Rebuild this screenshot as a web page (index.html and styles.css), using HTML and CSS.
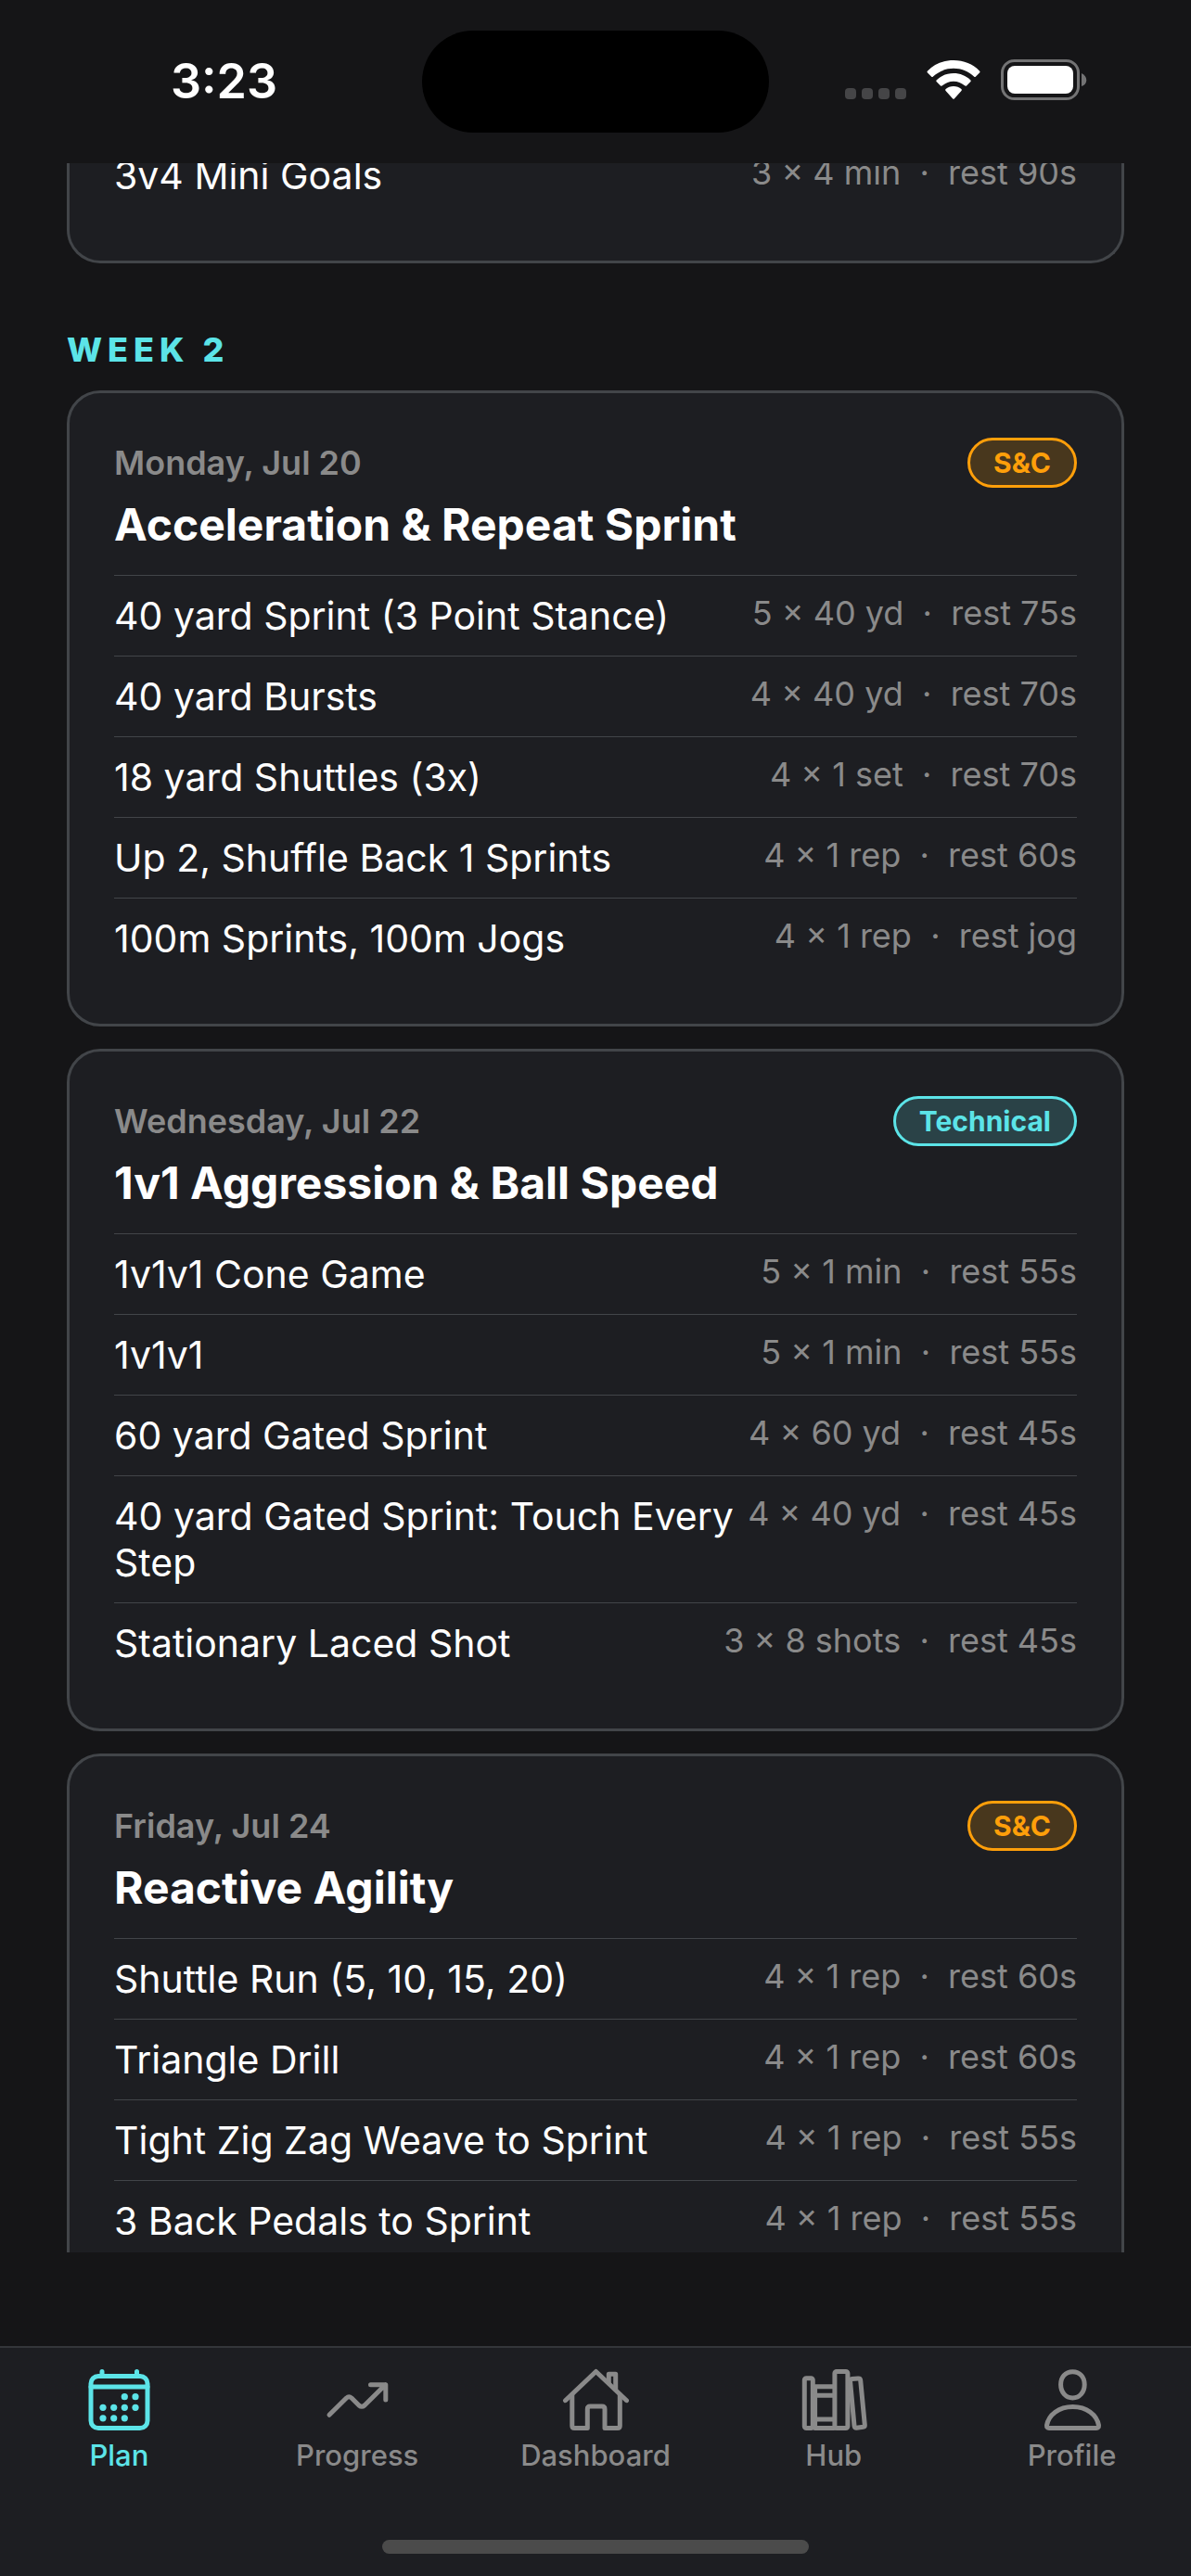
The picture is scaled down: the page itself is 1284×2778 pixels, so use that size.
FILE: index.html
```html
<!DOCTYPE html>
<html lang="en">
<head>
    <meta charset="UTF-8">
    <meta name="viewport" content="width=device-width, initial-scale=1.0">
    <title>Training Plan</title>
    <link rel="stylesheet" href="styles.css">
</head>

<body>

    <header class="status-bar">
        <div class="status-time">3:23</div>
        <div class="island"></div>
        <div class="status-icons">
            <svg width="66" height="44" viewBox="0 0 66 44" fill="#454547">
                <rect x="0" y="31" width="12" height="12" rx="4"/>
                <rect x="18" y="31" width="12" height="12" rx="4"/>
                <rect x="36" y="31" width="12" height="12" rx="4"/>
                <rect x="54" y="31" width="12" height="12" rx="4"/>
            </svg>
            <svg width="58" height="44" viewBox="0 0 58 44" fill="#fff">
                <path d="M29 1C18 1 8 5 1 12.500Q0 13.500 1 14.500L5 18.500Q6 19.500 7 18.500C13 13 20.500 9.800 29 9.800S45 13 51 18.500Q52 19.500 53 18.500L57 14.500Q58 13.500 57 12.500C50 5 40 1 29 1Z"/>
                <path d="M29 15C22 15 15.500 17.700 10.800 22.200Q9.800 23.200 10.800 24.200L15 28.400Q16 29.200 17 28.300C20.300 25.400 24.500 23.700 29 23.700S37.700 25.400 41 28.300Q42 29.200 43 28.400L47.200 24.200Q48.200 23.200 47.200 22.200C42.500 17.700 36 15 29 15Z"/>
                <path d="M29 29C25.700 29 22.800 30.100 20.600 31.900Q19.500 33 20.600 34.100L28 42.300Q29 43.300 30 42.300L37.400 34.100Q38.500 33 37.400 31.900C35.200 30.100 32.300 29 29 29Z"/>
            </svg>
            <svg width="93" height="44" viewBox="0 0 93 44">
                <rect x="1.500" y="1.500" width="82" height="41" rx="13" fill="none" stroke="#737374" stroke-width="3"/>
                <rect x="7" y="7" width="71" height="30" rx="8" fill="#fff"/>
                <path d="M87 15C94 18 94 27 87 29Z" fill="#737374"/>
            </svg>
        </div>
    </header>

    <main class="feed">
        <div class="feed-scroll">

            <section class="card card-passed">
                <ul class="drills">
                    <li><span>3v4 Mini Goals</span><span class="dose">3 × 4 min &nbsp;·&nbsp; rest 90s</span></li>
                </ul>
            </section>

            <h2 class="week">WEEK 2</h2>

            <section class="card">
                <div class="card-top">
                    <span class="date">Monday, Jul 20</span>
                    <span class="badge badge-sc">S&amp;C</span>
                </div>
                <h3>Acceleration &amp; Repeat Sprint</h3>
                <ul class="drills">
                    <li><span>40 yard Sprint (3 Point Stance)</span><span class="dose">5 × 40 yd &nbsp;·&nbsp; rest 75s</span></li>
                    <li><span>40 yard Bursts</span><span class="dose">4 × 40 yd &nbsp;·&nbsp; rest 70s</span></li>
                    <li><span>18 yard Shuttles (3x)</span><span class="dose">4 × 1 set &nbsp;·&nbsp; rest 70s</span></li>
                    <li><span>Up 2, Shuffle Back 1 Sprints</span><span class="dose">4 × 1 rep &nbsp;·&nbsp; rest 60s</span></li>
                    <li><span>100m Sprints, 100m Jogs</span><span class="dose">4 × 1 rep &nbsp;·&nbsp; rest jog</span></li>
                </ul>
            </section>

            <section class="card">
                <div class="card-top">
                    <span class="date">Wednesday, Jul 22</span>
                    <span class="badge badge-technical">Technical</span>
                </div>
                <h3>1v1 Aggression &amp; Ball Speed</h3>
                <ul class="drills">
                    <li><span>1v1v1 Cone Game</span><span class="dose">5 × 1 min &nbsp;·&nbsp; rest 55s</span></li>
                    <li><span>1v1v1</span><span class="dose">5 × 1 min &nbsp;·&nbsp; rest 55s</span></li>
                    <li><span>60 yard Gated Sprint</span><span class="dose">4 × 60 yd &nbsp;·&nbsp; rest 45s</span></li>
                    <li><span>40 yard Gated Sprint: Touch Every Step</span><span class="dose">4 × 40 yd &nbsp;·&nbsp; rest 45s</span></li>
                    <li><span>Stationary Laced Shot</span><span class="dose">3 × 8 shots &nbsp;·&nbsp; rest 45s</span></li>
                </ul>
            </section>

            <section class="card">
                <div class="card-top">
                    <span class="date">Friday, Jul 24</span>
                    <span class="badge badge-sc">S&amp;C</span>
                </div>
                <h3>Reactive Agility</h3>
                <ul class="drills">
                    <li><span>Shuttle Run (5, 10, 15, 20)</span><span class="dose">4 × 1 rep &nbsp;·&nbsp; rest 60s</span></li>
                    <li><span>Triangle Drill</span><span class="dose">4 × 1 rep &nbsp;·&nbsp; rest 60s</span></li>
                    <li><span>Tight Zig Zag Weave to Sprint</span><span class="dose">4 × 1 rep &nbsp;·&nbsp; rest 55s</span></li>
                    <li><span>3 Back Pedals to Sprint</span><span class="dose">4 × 1 rep &nbsp;·&nbsp; rest 55s</span></li>
                </ul>
            </section>

        </div>
    </main>

    <nav class="tab-bar">
        <div class="tabs">
            <a href="#plan" class="tab active">
                <svg class="icon" viewBox="0 0 72 72">
                    <rect x="6" y="10.500" width="61" height="56" rx="8"/>
                    <path d="M6 22H67M18 5.500V10M55.500 5.500V10"/>
                    <g class="dots">
                        <circle cx="42.300" cy="32.700" r="3.600"/><circle cx="54" cy="32.700" r="3.600"/>
                        <circle cx="19" cy="44.300" r="3.600"/><circle cx="30.700" cy="44.300" r="3.600"/><circle cx="42.300" cy="44.300" r="3.600"/><circle cx="54" cy="44.300" r="3.600"/>
                        <circle cx="19" cy="55.800" r="3.600"/><circle cx="30.700" cy="55.800" r="3.600"/><circle cx="42.300" cy="55.800" r="3.600"/>
                    </g>
                </svg>
                Plan
            </a>
            <a href="#progress" class="tab">
                <svg class="icon" viewBox="0 0 72 72">
                    <path d="M6 52.300L24.500 34Q27.200 31.500 30 34L38 42Q41 44.500 44 42L66.500 19.700M50.500 19.700H66.800V36"/>
                </svg>
                Progress
            </a>
            <a href="#dashboard" class="tab">
                <svg class="icon" viewBox="0 0 72 72">
                    <path d="M3.500 36.700L36.500 5.500L69.500 36.700"/>
                    <path d="M10.800 30.500V64Q10.800 66.500 13.300 66.500H27.300V46Q27.300 43 30.300 43H43Q46 43 46 46V66.500H59.800Q62.300 66.500 62.300 64V30.500"/>
                    <path d="M50.300 17V8.300H57.700V24.500"/>
                </svg>
                Dashboard
            </a>
            <a href="#hub" class="tab">
                <svg class="icon" viewBox="0 0 72 72">
                    <rect x="4.300" y="12.800" width="9" height="53.700" rx="2"/>
                    <path d="M15.600 21.800H36M15.600 31.300H36M15.600 57H36M15.600 21.800V66.500H36"/>
                    <rect x="36.900" y="5.500" width="14" height="61" rx="2"/>
                    <path d="M53.500 15.500Q53.500 13.700 55.500 13.500L62 13Q64.500 12.800 64.700 15L69.300 63Q69.500 65 67.500 65.300L60.500 66.200Q58.300 66.500 58 64Z"/>
                </svg>
                Hub
            </a>
            <a href="#profile" class="tab">
                <svg class="icon" viewBox="0 0 72 72">
                    <path d="M36.400 5.700C28.500 5.700 23.600 11.500 23.600 19.500C23.600 28 29 33.900 36.400 33.900S49.200 28 49.200 19.500C49.200 11.500 44.300 5.700 36.400 5.700Z"/>
                    <path d="M11 66.500H62Q64.700 66.500 64.500 63.500C62.500 52 51.500 43.500 36.500 43.500S10.500 52 8.500 63.500Q8.300 66.500 11 66.500Z"/>
                </svg>
                Profile
            </a>
        </div>
        <div class="home-indicator"></div>
    </nav>

</body>

</html>
```
FILE: styles.css
```css
* {
    box-sizing: border-box;
}
body {
    margin: 0;
    height: 100vh;
    display: flex;
    flex-direction: column;
    background-color: #151517;
    color: #fff;
    font-family: Inter, "Liberation Sans", sans-serif;
}
h2, h3, ul {
    margin: 0;
    padding: 0;
}

/* status bar */
.status-bar {
    flex: none;
    height: 176px;
    display: grid;
    grid-template-columns: 1fr 374px 1fr;
    align-items: center;
}
.status-time {
    font-size: 52px;
    font-weight: 600;
    text-align: center;
    padding: 0 0 2px 28px;
}
.island {
    height: 110px;
    border-radius: 55px;
    background-color: #000;
}
.status-icons {
    display: flex;
    justify-content: center;
    gap: 22px;
    padding: 0 30px 4px 0;
}

/* scrolling list */
.feed {
    flex: 1;
    min-height: 0;
    margin-bottom: 101px;
    padding: 0 72px;
    overflow: hidden;
}
.feed-scroll {
    display: flex;
    flex-direction: column;
    gap: 24px;
    margin-top: -12px;
}
.week {
    margin-top: 49px;
    font-size: 36px;
    font-weight: 800;
    line-height: 40px;
    letter-spacing: 6px;
    color: #5ce4e8;
}
.card {
    padding: 48px 48px 49px;
    border: 3px solid #424549;
    border-radius: 36px;
    background-color: #1d1e22;
}
.card-top {
    display: flex;
    justify-content: space-between;
    align-items: center;
    height: 54px;
}
.date {
    font-size: 36px;
    font-weight: 600;
    line-height: 44px;
    color: #8a8a8a;
}
.badge {
    height: 54px;
    padding: 0 25px;
    border: 3px solid;
    border-radius: 27px;
    font-size: 30px;
    font-weight: 700;
    line-height: 48px;
}
.badge-sc {
    color: #ff9f0a;
    background-color: #48371d;
}
.badge-technical {
    color: #5ce4e8;
    background-color: #2a4247;
}
h3 {
    margin: 11px 0 26px;
    font-size: 48px;
    font-weight: 700;
    line-height: 57px;
}
.drills {
    list-style: none;
}
.drills li {
    display: flex;
    justify-content: space-between;
    gap: 12px;
    padding: 18px 0;
    border-top: 1px solid #424549;
    font-size: 41px;
    line-height: 50px;
}
.dose {
    flex: none;
    font-size: 36px;
    line-height: 44px;
    color: #8a8a8a;
}
/* workout already scrolled under the status bar */
.card-passed {
    padding-top: 0;
    border-top: 0;
    border-radius: 0 0 36px 36px;
}
.card-passed .drills li {
    padding-top: 0;
    border-top: 0;
}

/* bottom navigation */
.tab-bar {
    flex: none;
    display: flex;
    flex-direction: column;
    justify-content: space-between;
    height: 248px;
    padding: 20px 0 24px;
    border-top: 2px solid #34363a;
    background-color: #1d1e22;
}
.tabs {
    display: grid;
    grid-template-columns: repeat(5, 1fr);
}
.tab {
    display: flex;
    flex-direction: column;
    align-items: center;
    gap: 6px;
    font-size: 31px;
    font-weight: 500;
    line-height: 36px;
    color: #8a8a8a;
    text-decoration: none;
}
.tab.active {
    color: #5ce4e8;
}
.icon {
    width: 72px;
    height: 72px;
    fill: none;
    stroke: currentColor;
    stroke-width: 5;
    stroke-linecap: round;
    stroke-linejoin: round;
}
.dots {
    fill: currentColor;
    stroke: none;
}
.home-indicator {
    align-self: center;
    width: 460px;
    height: 15px;
    border-radius: 8px;
    background-color: #4b4b4b;
}
```
